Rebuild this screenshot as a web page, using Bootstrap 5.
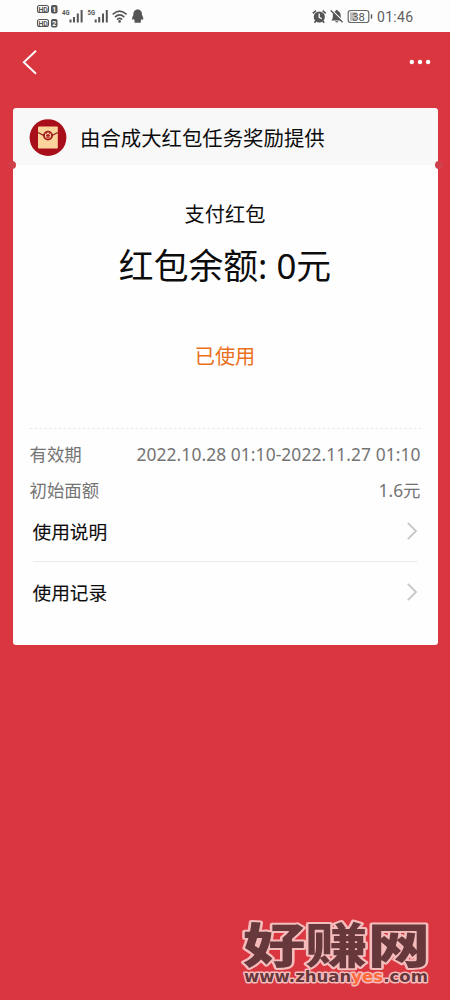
<!DOCTYPE html>
<html lang="zh-CN">
<head>
  <meta charset="utf-8">
  <meta name="viewport" content="width=device-width, initial-scale=1">
  <title>支付红包</title>
  <link href="https://cdn.jsdelivr.net/npm/bootstrap@5.3.3/dist/css/bootstrap.min.css" rel="stylesheet">
  <style>
    body {
      background-color: #d93640;
      font-family: "Noto Sans CJK SC", sans-serif;
      color: #0c0c0c;
      overflow: hidden;
    }
    .screen { height: 1000px; }
    .status-bar { height: 32px; background-color: #fdfdfd; }
    .status-bar svg { display: block; }
    .top-nav { height: 60px; padding: 0 19px 0 21px; }
    .coupon { margin: 16px 12.5px 0; }
    .coupon-head {
      height: 57px;
      padding-left: 16.5px;
      background-color: #f8f8f8;
      border-radius: 3px 3px 0 0;
      font-size: 20.4px;
      line-height: 30px;
    }
    .coupon-head span { margin-left: 13px; }
    .notch {
      position: absolute;
      top: 53px;
      width: 8px;
      height: 8px;
      border-radius: 50%;
      background-color: #d0404a;
    }
    .notch-left { left: -5px; }
    .notch-right { right: -5px; }
    .coupon-body {
      height: 480px;
      background-color: #fefefe;
      border-radius: 0 0 3px 3px;
    }
    .summary { height: 263px; margin: 0 17px; padding-top: 34px; }
    .kind { font-size: 20.2px; line-height: 30px; }
    .balance { height: 50px; font-size: 34.8px; line-height: 50px; margin-top: 10px; }
    .state { font-size: 20.2px; line-height: 30px; margin-top: 52px; color: #ea701c; }
    .latin { font-family: "Noto Sans", "Noto Sans CJK SC", sans-serif; }
    .dash { display: block; margin: 0 17px; }
    .info { height: 77px; padding: 7px 17px 0; font-size: 17.4px; line-height: 36px; color: #747474; }
    .period { letter-spacing: .08px; }
    .link-row {
      height: 61px;
      margin: 0 20px;
      font-size: 18.7px;
      -webkit-text-stroke: .1px #0c0c0c;
    }
    .link-first { height: 55px; padding-bottom: 5px; }
    .link-line { border-top: 1px solid #ececec; }
    .site-mark { margin: auto 16px 4px auto; overflow: visible; }
  </style>
</head>
<body>
  <div class="screen d-flex flex-column">
    <!-- status bar -->
    <div class="status-bar flex-shrink-0">
      <svg width="450" height="32" viewBox="0 0 450 32" font-family="Roboto, sans-serif">
        <g fill="none" stroke="#555" stroke-width="1.1">
          <rect x="37.5" y="5.5" width="11" height="7" rx="2"/>
          <rect x="37.5" y="19.5" width="11" height="7" rx="2"/>
        </g>
        <g fill="#555">
          <rect x="51" y="5" width="6.5" height="8.5" rx="1.8"/>
          <rect x="51" y="19" width="6.5" height="8.5" rx="1.8"/>
        </g>
        <g font-size="7" font-weight="700" fill="#555">
          <text x="38.4" y="11.6">HD</text>
          <text x="38.4" y="25.6">HD</text>
          <text x="52.3" y="11.8" fill="#fff">1</text>
          <text x="52.3" y="25.8" fill="#fff">2</text>
          <text x="62" y="15.4" font-size="7.5" textLength="7.5" lengthAdjust="spacingAndGlyphs">4G</text>
          <text x="87.5" y="15.4" font-size="7.5" textLength="7.5" lengthAdjust="spacingAndGlyphs">5G</text>
        </g>
        <g stroke="#555" stroke-width="2">
          <path d="M70.5 19.5V22.5M74 17V22.5M77.8 13.5V22.5M81.6 10V22.5"/>
          <path d="M95.7 19.5V22.5M99.2 17V22.5M103 13.5V22.5M106.8 10V22.5"/>
        </g>
        <g fill="none" stroke="#555" stroke-width="1.6">
          <path d="M112.7 14.3Q119.6 7.8 126.6 14.3M115 17.1Q119.6 12.7 124.3 17.1M117.2 19.6Q119.6 17.3 122.1 19.6"/>
        </g>
        <circle cx="119.6" cy="21.4" r="1.3" fill="#555"/>
        <path fill="#555" d="M137.7 9.5C134.5 9.5 133.2 12 133.4 15C132.2 16.8 131.7 19 132.4 19.8C132.8 20 133.3 19.2 133.6 18.8C133.8 19.8 134.3 20.6 135 21.2C133.4 22 134 23 137.7 22.8C141.4 23 142 22 140.4 21.2C141.1 20.6 141.6 19.8 141.8 18.8C142.1 19.2 142.6 20 143 19.8C143.7 19 143.2 16.8 142 15C142.2 12 140.9 9.5 137.7 9.5Z"/>
        <!-- alarm clock -->
        <circle cx="319.3" cy="17" r="5.6" fill="#555"/>
        <path d="M319.2 13.6V17.3L321.8 18.8" fill="none" stroke="#fdfdfd" stroke-width="1.3"/>
        <path d="M312.8 13.4L316 10.7M322.6 10.7L325.8 13.4M315.8 21L314.4 22.8M322.8 21L324.2 22.8" fill="none" stroke="#555" stroke-width="1.6"/>
        <!-- muted bell -->
        <path fill="#555" d="M331.3 20.5C333 18.8 332.8 17 332.8 15.2C332.9 12.8 334 11.4 335.8 11V10H337.7V11C339.6 11.5 340.6 13 340.7 15.2C340.7 17 340.7 18.8 342.3 20.5ZM335 21.2H338.5Q336.8 23.8 335 21.2Z"/>
        <path d="M331.8 10.2L343.4 21.6" stroke="#fdfdfd" stroke-width="1.6"/>
        <path d="M330.8 10.6L342.6 22.3" stroke="#555" stroke-width="1.4"/>
        <!-- battery -->
        <rect x="348.2" y="10.5" width="20.6" height="12" rx="2.5" fill="none" stroke="#666" stroke-width="1.2"/>
        <rect x="350" y="12.2" width="6.5" height="8.6" fill="#bdbdbd"/>
        <path d="M371.5 14.3V18.7" stroke="#555" stroke-width="1.4"/>
        <text x="352.2" y="20.6" font-size="11.3" fill="#555">38</text>
        <text x="377" y="22" font-size="14" fill="#606060" textLength="36">01:46</text>
      </svg>
    </div>

    <!-- navigation -->
    <div class="top-nav d-flex align-items-center justify-content-between flex-shrink-0">
      <svg width="18" height="26" viewBox="0 0 18 26"><path d="M15 1.8L2.8 13.3L15 24.8" fill="none" stroke="#fff" stroke-width="1.9"/></svg>
      <svg width="22" height="6" viewBox="0 0 22 6" fill="#fff"><circle cx="2.8" cy="3" r="2.2"/><circle cx="11" cy="3" r="2.2"/><circle cx="19.1" cy="3" r="2.2"/></svg>
    </div>

    <!-- coupon -->
    <div class="coupon position-relative">
      <div class="coupon-head d-flex align-items-center">
        <svg width="38" height="38" viewBox="0 0 38 38">
          <circle cx="19" cy="19.6" r="18.4" fill="#a90f1a"/>
          <rect x="9" y="8.6" width="19.8" height="22" rx=".8" fill="#fbd59b"/>
          <path d="M9 14.6Q18.9 21.5 28.8 14.6" fill="none" stroke="#8d2420" stroke-width="1.2"/>
          <circle cx="19" cy="17.6" r="4" fill="#fbd59b" stroke="#9e1b1e" stroke-width="1.8"/>
          <path d="M17.3 15.2L19 17.3L20.7 15.2M17.1 17.5H20.9M17.1 19H20.9M19 17.3V20.6" fill="none" stroke="#a90f1a" stroke-width=".9"/>
        </svg>
        <span>由合成大红包任务奖励提供</span>
      </div>
      <div class="coupon-body">
        <div class="summary text-center">
          <div class="kind">支付红包</div>
          <div class="balance">红包余额<span class="latin">: 0</span>元</div>
          <div class="state">已使用</div>
        </div>
        <svg class="dash" width="391" height="1"><path d="M0 .5H391" stroke="#e6e6e6" stroke-dasharray="2.5 2.3"/></svg>
        <div class="info">
          <div class="d-flex justify-content-between">
            <span>有效期</span>
            <span class="period latin">2022.10.28 01:10-2022.11.27 01:10</span>
          </div>
          <div class="d-flex justify-content-between">
            <span>初始面额</span>
            <span><span class="latin">1.6</span>元</span>
          </div>
        </div>
        <div class="link-row link-first d-flex align-items-center justify-content-between">
          <span>使用说明</span>
          <svg width="12" height="20" viewBox="0 0 12 20"><path d="M1.8 1.8L10 10L1.8 18.2" fill="none" stroke="#c6c6c6" stroke-width="1.8"/></svg>
        </div>
        <div class="link-row link-line d-flex align-items-center justify-content-between">
          <span>使用记录</span>
          <svg width="12" height="20" viewBox="0 0 12 20"><path d="M1.8 1.8L10 10L1.8 18.2" fill="none" stroke="#c6c6c6" stroke-width="1.8"/></svg>
        </div>
      </div>
      <div class="notch notch-left"></div>
      <div class="notch notch-right"></div>
    </div>

    <!-- site mark -->
    <svg class="site-mark flex-shrink-0" width="195" height="80" viewBox="0 0 195 80" paint-order="stroke" stroke-linejoin="round">
      <text x="4" y="46.5" font-family="'Noto Sans CJK SC', sans-serif" font-weight="900" font-size="48" textLength="187" lengthAdjust="spacingAndGlyphs" fill="#66383c" stroke="#f5bcbc" stroke-width="4">好赚网</text>
      <text x="5" y="66" font-family="'DejaVu Sans', sans-serif" font-weight="700" font-size="16" textLength="184" lengthAdjust="spacingAndGlyphs" fill="#66383c" stroke="#f5bcbc" stroke-width="3">www.zhuan<tspan fill="#ff6a3c">yes</tspan>.com</text>
    </svg>
  </div>
  <script src="https://cdn.jsdelivr.net/npm/bootstrap@5.3.3/dist/js/bootstrap.bundle.min.js"></script>
</body>
</html>
